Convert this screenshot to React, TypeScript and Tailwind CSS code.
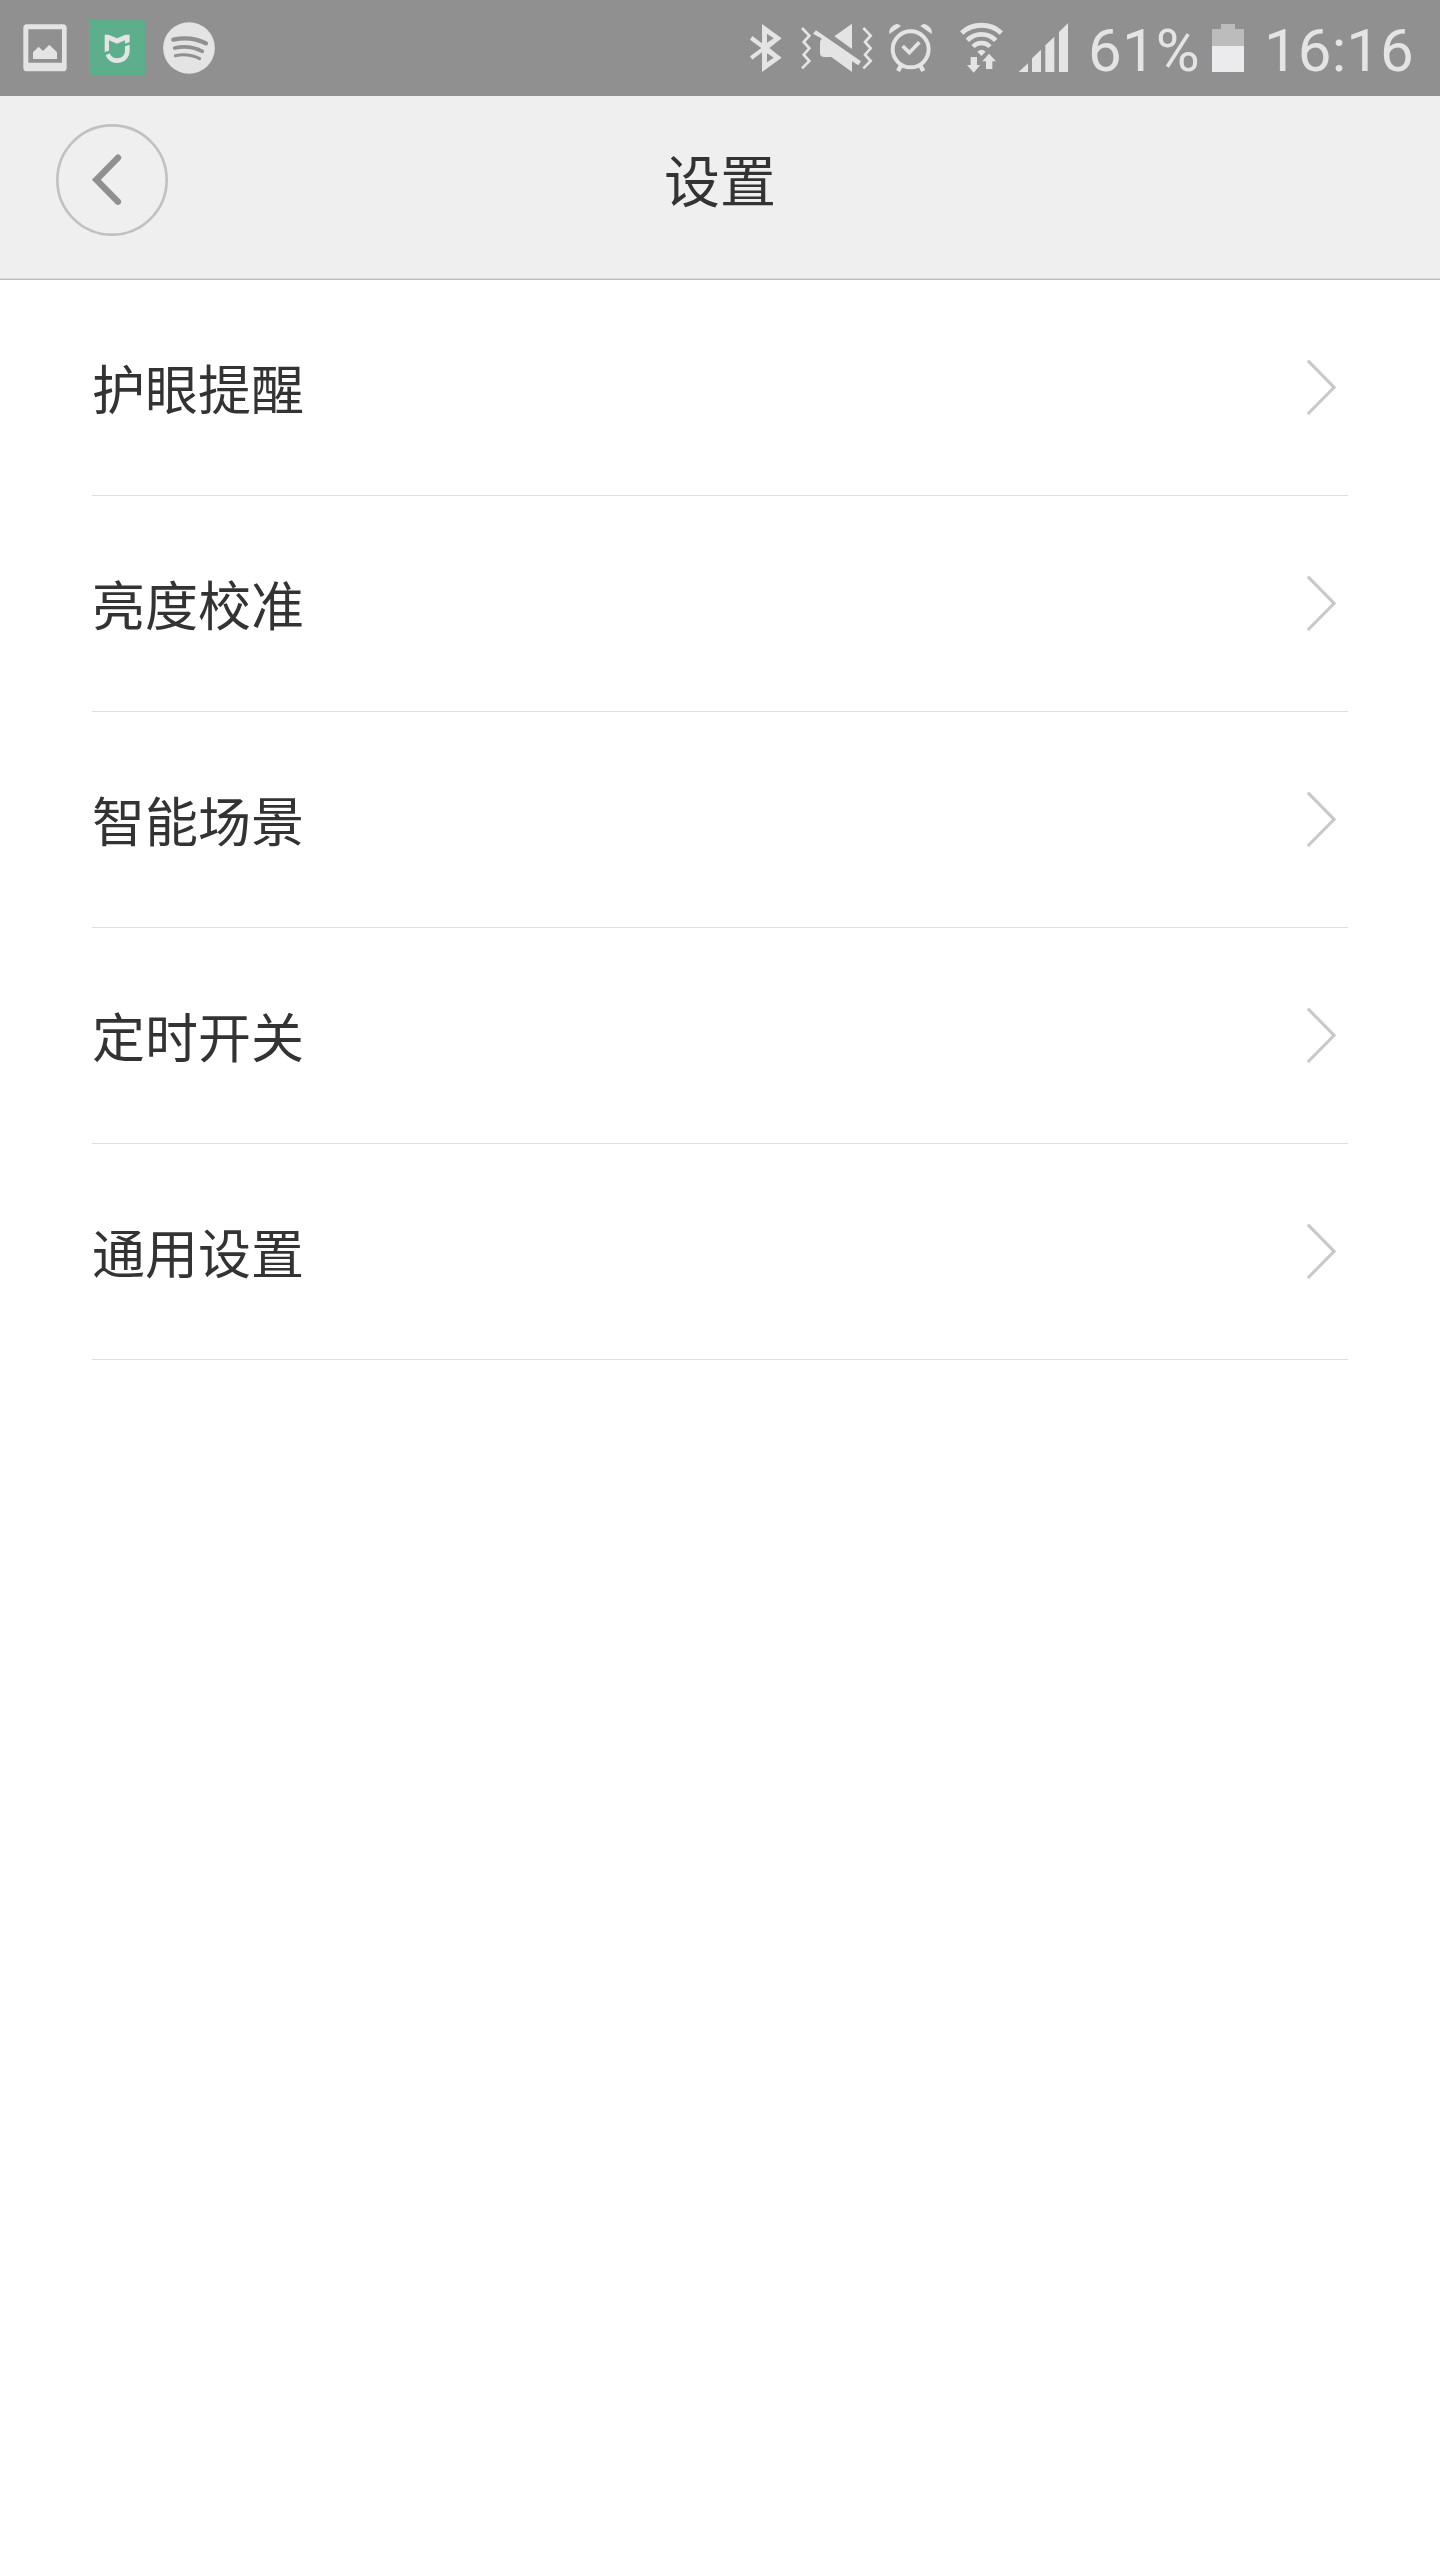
const items = ['护眼提醒', '亮度校准', '智能场景', '定时开关', '通用设置'];

function PhotoIcon() {
  return (
    <svg className="ml-[22px] h-24 w-[46px]" viewBox="66 0 138 288" fill="#e4e4e4">
      <path
        fillRule="evenodd"
        d="M81 73H189Q200 73 200 84V203Q200 214 189 214H81Q70 214 70 203V84Q70 73 81 73ZM85 88V188H186V88Z"
      />
      <path d="M99 157L116 140L129 153L148 134L171 157V177H99Z" />
    </svg>
  );
}

function MiHomeIcon() {
  return (
    <svg className="ml-[21px] h-24 w-14" viewBox="267 0 168 288" fill="#e4e4e4">
      <rect x="267" y="60" width="168" height="168" fill="#5dae8a" />
      <path d="M314 104H326L351 115L376 104H389V126L375 131V121L351 131L327 121V152L314 156Z" />
      <path d="M375 139L389 134V151C389 174 373 189 351 189C335 189 323 181 317 166L329 160C333 170 341 175 351 175C366 175 375 166 375 151Z" />
    </svg>
  );
}

function SpotifyIcon() {
  return (
    <svg className="ml-[18px] h-24 w-[52px]" viewBox="489 0 156 288" fill="none" stroke="#909090" strokeLinecap="round">
      <circle cx="567" cy="144" r="77.5" fill="#e4e4e4" stroke="none" />
      <path d="M520 119Q573 107 618 130" strokeWidth="13" />
      <path d="M524 144Q568 134 607 154" strokeWidth="11" />
      <path d="M526 167Q565 159 599 176" strokeWidth="9" />
    </svg>
  );
}

function BluetoothIcon() {
  return (
    <svg className="h-24 w-8" viewBox="60 0 96 288" fill="#e4e4e4">
      <path
        fillRule="evenodd"
        d="M96 72L155 115L118 144L155 173L96 216V157L67 179L60 169L94 144L60 119L67 108L96 130ZM111 101V128L131 115ZM111 160V187L131 173Z"
      />
    </svg>
  );
}

function MuteIcon() {
  return (
    <svg className="ml-[18px] h-24 w-[74px]" viewBox="210 0 222 288" fill="#e4e4e4">
      <g fill="none" stroke="#e4e4e4" strokeWidth="8">
        <path d="M216 84L238 107L221 126L238 145L221 164L238 183L216 205" />
        <path d="M400 84L422 107L405 126L422 145L405 164L422 183L400 205" />
      </g>
      <path d="M366 71V147L313 109Z" />
      <path d="M258 91L393 184L385 196L366 184V216L304 171H283Q270 171 270 158V128Q270 119 276 116L249 101Z" />
    </svg>
  );
}

function AlarmIcon() {
  return (
    <svg className="ml-[15px] h-24 w-11" viewBox="477 0 132 288" fill="none" stroke="#e4e4e4">
      <circle cx="542" cy="148" r="54" strokeWidth="12" />
      <path d="M518 138L538 158L568 127" strokeWidth="11" />
      <path d="M513 197L504 213M571 197L580 213" strokeWidth="13" />
      <path d="M478 102Q477 90 481 85Q489 74 499 72Q505 71 513 78Z" fill="#e4e4e4" stroke="none" />
      <path d="M605 102Q606 90 602 85Q594 74 584 72Q578 71 571 78Z" fill="#e4e4e4" stroke="none" />
    </svg>
  );
}

function WifiIcon() {
  return (
    <svg className="ml-[27px] h-24 w-[43px]" viewBox="60 0 129 288" fill="none" stroke="#e4e4e4">
      <path d="M65 99Q90 76 124.500 76Q159 76 184 99" strokeWidth="15" />
      <path d="M82 121Q99 103 124.500 103Q150 103 167 121" strokeWidth="14" />
      <path d="M99 140Q109 129 124.500 129Q140 129 150 140" strokeWidth="13" />
      <g fill="#e4e4e4" stroke="none">
        <path d="M112 155Q124.500 143 137 155L124.500 168Z" />
        <path d="M92 171H111V195H121L101 218L81 195H92Z" />
        <path d="M138 207H157V184H168L147 161L127 184H138Z" />
      </g>
    </svg>
  );
}

function SignalIcon() {
  return (
    <svg className="ml-[15px] h-24 w-[51px]" viewBox="234 0 153 288" fill="#e4e4e4">
      <path d="M236 216L264 190V216ZM276 216V175L303 149V216ZM316 216V136L343 110V216ZM357 216V96L384 69V216Z" />
    </svg>
  );
}

function BatteryIcon() {
  return (
    <svg className="h-24 w-8" viewBox="426 0 96 288">
      <path d="M426 87H453V72H495V87H522V138H426Z" fill="#bcbcbc" />
      <rect x="426" y="138" width="96" height="78" fill="#ebebed" />
    </svg>
  );
}

function StatusBar() {
  return (
    <div className="flex h-24 items-center justify-between bg-[#909090] font-[Roboto,sans-serif] text-[60px] leading-none text-[#e4e4e4]">
      <div className="flex">
        <PhotoIcon />
        <MiHomeIcon />
        <SpotifyIcon />
      </div>
      <div className="flex w-[690px] items-center">
        <BluetoothIcon />
        <MuteIcon />
        <AlarmIcon />
        <WifiIcon />
        <SignalIcon />
        <span className="ml-[19px] w-[124px] whitespace-nowrap pt-[5px] tracking-[0.2px]">61%</span>
        <BatteryIcon />
        <span className="ml-5 whitespace-nowrap pt-[5px] tracking-[0.1px]">16:16</span>
      </div>
    </div>
  );
}

export default function App() {
  return (
    <div className="min-h-[2560px] w-[1440px] bg-white font-['Noto_Sans_CJK_SC',sans-serif] text-[#333333]">
      <StatusBar />
      <header className="grid h-[184px] grid-cols-[1fr_auto_1fr] items-start border-b border-[#bcbcbc] bg-[#efefef] shadow-[inset_0_-1px_0_#dadada]">
        <button aria-label="返回" className="ml-14 mt-7 size-28">
          <svg className="size-28" viewBox="0 0 336 336" fill="none">
            <circle cx="168" cy="168" r="164" stroke="#c1c1c1" strokeWidth="8" />
            <path d="M186 101L121 167L186 233" stroke="#909090" strokeWidth="19" strokeLinecap="round" />
          </svg>
        </button>
        <h1 className="mt-[42px] text-[56px] leading-[80px]">设置</h1>
      </header>
      <ul className="px-[92px]">
        {items.map((label) => (
          <li key={label} className="flex h-[216px] items-center justify-between border-b border-[#dfdfdf] pb-px pr-[12px]">
            <span className="text-[53px] leading-[80px]">{label}</span>
            <svg className="h-[56px] w-[30px]" viewBox="0 0 90 168" fill="none" stroke="#c8c8c8" strokeWidth="9">
              <path d="M5.500 5L84.500 85L5.500 165" />
            </svg>
          </li>
        ))}
      </ul>
    </div>
  );
}
